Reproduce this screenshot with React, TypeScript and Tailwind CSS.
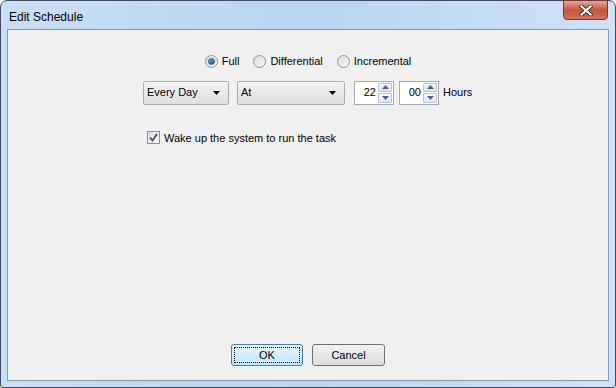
import React from "react";

const F = { fontFamily: '"Liberation Sans", Arial, sans-serif' };

function Radio({ checked, label }: { checked?: boolean; label: string }) {
  return (
    <div className="flex items-center gap-[4px]">
      <div className="w-[13px] h-[13px] rounded-full border border-[#8e8f8f] bg-gradient-to-br from-[#dcdcdc] to-[#f8f8f8] flex items-center justify-center">
        {checked && <div className="w-[7px] h-[7px] rounded-full bg-gradient-to-br from-[#5ab0e6] to-[#0c5e9c] border border-[#1b5b8c]" />}
      </div>
      <span className="text-[11px] text-black">{label}</span>
    </div>
  );
}

function Select({ label, w }: { label: string; w: string }) {
  return (
    <div className={`${w} h-[24px] border border-[#acacac] rounded-[2px] bg-gradient-to-b from-[#f4f4f4] to-[#dedede] flex items-center justify-between pl-[3px] pr-[8px]`}>
      <span className="text-[11px] text-black">{label}</span>
      <svg width="7" height="4" viewBox="0 0 7 4"><path d="M0 0H7L3.5 4Z" fill="#000" /></svg>
    </div>
  );
}

function Spin({ value }: { value: string }) {
  return (
    <div className="w-[40px] h-[24px] border border-[#a9a9a9] bg-white flex items-center">
      <span className="flex-1 text-right pr-[2px] text-[11px] text-black">{value}</span>
      <div className="w-[15px] h-full flex flex-col py-[1px] pr-[1px] gap-[1px]">
        <div className="flex-1 border border-[#b5c5d8] rounded-[1px] bg-gradient-to-b from-[#f6f8fb] to-[#dde5ee] flex items-center justify-center">
          <svg width="7" height="4" viewBox="0 0 7 4"><path d="M0 4H7L3.5 0Z" fill="#4d6185" /></svg>
        </div>
        <div className="flex-1 border border-[#b5c5d8] rounded-[1px] bg-gradient-to-b from-[#f6f8fb] to-[#dde5ee] flex items-center justify-center">
          <svg width="7" height="4" viewBox="0 0 7 4"><path d="M0 0H7L3.5 4Z" fill="#4d6185" /></svg>
        </div>
      </div>
    </div>
  );
}

export default function App() {
  return (
    <div style={F} className="w-[616px] h-[388px] bg-white">
      <div className="w-[616px] h-[388px] rounded-t-[7px] rounded-b-[3px] border border-[#3e4c5e] bg-gradient-to-r from-[#c9dff5] via-[#b9d5f2] to-[#cfe3f8] flex flex-col">
        <div className="h-[28px] flex items-start justify-between pl-[8px] pr-[7px]">
          <span className="mt-[7px] text-[12px] text-black">Edit Schedule</span>
          <div className="w-[45px] h-[20px] -mt-[1px] rounded-b-[4px] border border-[#6b3b3b] bg-gradient-to-b from-[#e8a493] via-[#c75441] to-[#d46e58] flex items-center justify-center">
            <svg width="14" height="11" viewBox="0 0 14 11">
              <path d="M2.5 1.5L11.5 9.5M11.5 1.5L2.5 9.5" stroke="#3a2a2a" strokeWidth="4" strokeLinecap="square" />
              <path d="M2.5 1.5L11.5 9.5M11.5 1.5L2.5 9.5" stroke="#ffffff" strokeWidth="2.2" strokeLinecap="square" />
            </svg>
          </div>
        </div>
        <div className="flex-1 mx-[6px] mb-[6px] border border-[#8597ad] bg-[#f0f0f0] flex flex-col">
          <div className="flex justify-center gap-[14px] mt-[23px]">
            <Radio checked label="Full" />
            <Radio label="Differential" />
            <Radio label="Incremental" />
          </div>
          <div className="flex items-center mt-[11px] ml-[135px]">
            <Select label="Every Day" w="w-[86px]" />
            <div className="w-[8px]" />
            <Select label="At" w="w-[108px]" />
            <div className="w-[9px]" />
            <Spin value="22" />
            <div className="w-[5px]" />
            <Spin value="00" />
            <span className="ml-[4px] text-[11px] text-black">Hours</span>
          </div>
          <div className="flex items-center mt-[25px] ml-[139px] gap-[4px]">
            <div className="w-[13px] h-[13px] border border-[#8e8f8f] bg-gradient-to-br from-[#dcdcdc] to-[#fafafa] flex items-center justify-center">
              <svg width="9" height="9" viewBox="0 0 9 9"><path d="M1 4.5L3.5 7.5L8 1" stroke="#3b4a8a" strokeWidth="1.8" fill="none" /></svg>
            </div>
            <span className="text-[11px] text-black">Wake up the system to run the task</span>
          </div>
          <div className="flex-1" />
          <div className="flex justify-center gap-[9px] mb-[14px]">
            <div className="w-[72px] h-[22px] rounded-[3px] border border-[#3c7fb1] bg-gradient-to-b from-[#eaf6fd] to-[#bee6fd] p-[2px]">
              <div className="w-full h-full border border-dotted border-black flex items-center justify-center">
                <span className="text-[11px] text-black">OK</span>
              </div>
            </div>
            <div className="w-[73px] h-[22px] rounded-[3px] border border-[#707070] bg-gradient-to-b from-[#f2f2f2] to-[#dddddd] flex items-center justify-center">
              <span className="text-[11px] text-black">Cancel</span>
            </div>
          </div>
        </div>
      </div>
    </div>
  );
}
